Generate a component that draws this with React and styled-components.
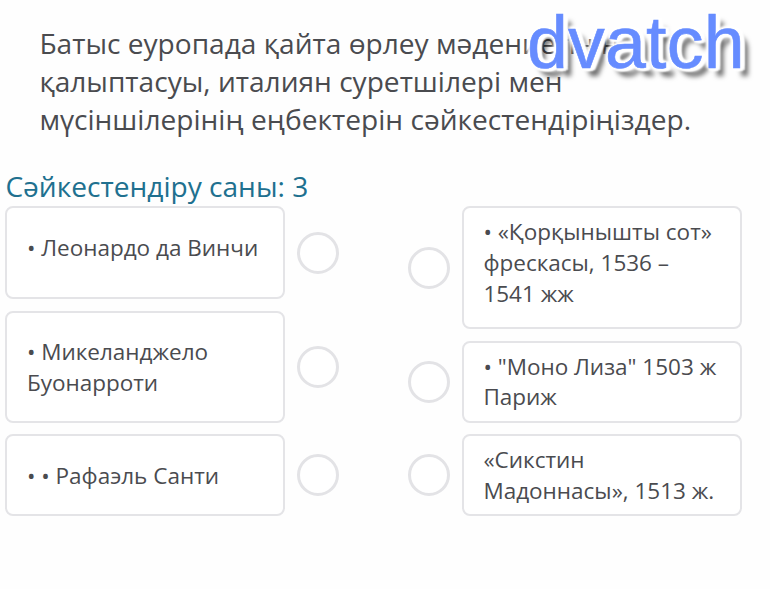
import React from "react";
import styled, { createGlobalStyle } from "styled-components";

const leftItems = [
  { height: 93, lines: ["• Леонардо да Винчи"] },
  { height: 112, lines: ["• Микеланджело", "Буонарроти"] },
  { height: 82, lines: ["• • Рафаэль Санти"] },
];

const rightItems = [
  { height: 123, lines: ["• «Қорқынышты сот»", "фрескасы, 1536 –", "1541 жж"] },
  { height: 82, lines: ['• "Моно Лиза" 1503 ж', "Париж"] },
  { height: 82, lines: ["«Сикстин", "Мадоннасы», 1513 ж."] },
];

const GlobalStyle = createGlobalStyle`
  * {
    box-sizing: border-box;
  }
  body {
    margin: 0;
    background: #fefefe;
    font-family: "Open Sans", "Noto Sans", sans-serif;
    color: #4a4b4f;
  }
`;

const Page = styled.main`
  position: relative;
  height: 589px;
  padding: 24px 0 0 5.4px;
  overflow: hidden;
`;

const Question = styled.p`
  margin: 0 0 0 34px;
  font-size: 28.1px;
  line-height: 38px;
  white-space: nowrap;
`;

const Line = styled.span`
  display: block;
`;

const Counter = styled.h2`
  margin: 29px 0 0;
  height: 39px;
  font-size: 28.1px;
  font-weight: 400;
  line-height: 38px;
  color: #20708f;
  white-space: nowrap;
`;

const Board = styled.div`
  display: flex;
  justify-content: space-between;
  width: 736.5px;
`;

const Column = styled.div`
  display: flex;
  flex-direction: column;
  gap: 11.5px;
`;

const Row = styled.div`
  display: flex;
  flex-direction: ${(props) => (props.$reverse ? "row-reverse" : "row")};
  align-items: center;
  gap: 12px;
`;

const Card = styled.div`
  width: 280px;
  height: ${(props) => props.$height}px;
  padding: ${(props) => props.$top}px 0 0 19.5px;
  border: 2px solid #e4e4e7;
  border-radius: 8px;
  background: #fff;
  font-size: 22.5px;
  line-height: 30.8px;
  white-space: nowrap;
`;

const Dot = styled.span`
  width: 42px;
  height: 42px;
  border: 3.5px solid #e3e3e6;
  border-radius: 50%;
  background: #fff;
`;

/* white rim with a soft shadow towards the bottom right */
const Watermark = styled.div`
  position: absolute;
  top: 2px;
  left: 527px;
  font-family: "Liberation Sans", Arial, sans-serif;
  font-size: 73.5px;
  letter-spacing: 0.2px;
  line-height: 82px;
  color: #668cff;
  -webkit-text-stroke: 0.6px #668cff;
  text-shadow:
    0 0 3px #fff,
    3px 0 2px #fff,
    -3px 0 3px #fff,
    0 3px 2px #fff,
    3px 3px 2px #fff,
    5px 2px 2px #fff,
    0 -3px 3px #fff,
    4px -2px 2px #fff,
    8px 8px 5px rgba(0, 0, 0, 0.6);
`;

const MatchColumn = ({ items, reverse, top }) => (
  <Column>
    {items.map((item, index) => (
      <Row key={index} $reverse={reverse}>
        <Card $height={item.height} $top={top}>
          {item.lines.map((line) => (
            <Line key={line}>{line}</Line>
          ))}
        </Card>
        <Dot />
      </Row>
    ))}
  </Column>
);

const App = () => {
  return (
    <>
      <GlobalStyle />
      <Page>
        <Question>
          <Line>Батыс еуропада қайта өрлеу мәдениетінің</Line>
          <Line>қалыптасуы, италиян суретшілері мен</Line>
          <Line>мүсіншілерінің еңбектерін сәйкестендіріңіздер.</Line>
        </Question>
        <Counter>Сәйкестендіру саны: 3</Counter>
        <Board>
          <MatchColumn items={leftItems} top={24.6} />
          <MatchColumn items={rightItems} top={9} reverse />
        </Board>
        <Watermark>dvatch</Watermark>
      </Page>
    </>
  );
};

export default App;
